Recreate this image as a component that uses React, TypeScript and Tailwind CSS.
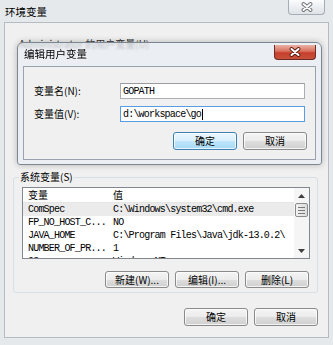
import React from 'react';

const cjk = "font-['Noto_Sans_CJK_SC',sans-serif]";
const mono = "font-['Liberation_Mono','Noto_Sans_CJK_SC',monospace] tracking-[-0.8px] whitespace-pre";

const systemVars: [string, string][] = [
  ['ComSpec', 'C:\\Windows\\system32\\cmd.exe'],
  ['FP_NO_HOST_C...', 'NO'],
  ['JAVA_HOME', 'C:\\Program Files\\Java\\jdk-13.0.2\\'],
  ['NUMBER_OF_PR...', '1'],
  ['OS', 'Windows_NT'],
];

function CloseGlyph({ dark }: { dark: string }) {
  return (
    <svg width="12" height="10" viewBox="0 0 12 10">
      <path d="M2.5 2 L9.5 8 M9.5 2 L2.5 8" stroke={dark} strokeWidth="3.8" strokeLinecap="round" />
      <path d="M2.5 2 L9.5 8 M9.5 2 L2.5 8" stroke="#ffffff" strokeWidth="2" strokeLinecap="round" />
    </svg>
  );
}

function Btn({ children, primary, tall }: { children: React.ReactNode; primary?: boolean; tall?: boolean }) {
  return (
    <div
      className={`${cjk} flex ${tall ? 'h-[18px]' : 'h-[17px]'} w-[64px] items-center justify-center rounded-[3px] border text-[10px] leading-none text-black shadow-[inset_0_0_0_1px_rgba(255,255,255,0.75)] ${
        primary
          ? 'border-[#3c7fb1] bg-[linear-gradient(to_bottom,#eaf6fd_0%,#d9f0fc_50%,#bee6fd_50%,#a7d9f5_100%)]'
          : 'border-[#8a8a8a] bg-[linear-gradient(to_bottom,#f4f4f4_0%,#ececec_50%,#dedede_50%,#d0d0d0_100%)]'
      }`}
    >
      {children}
    </div>
  );
}

function Arrow({ up }: { up?: boolean }) {
  return (
    <svg width="7" height="4" viewBox="0 0 7 4">
      <path d={up ? 'M0 4 L3.5 0 L7 4 Z' : 'M0 0 L3.5 4 L7 0 Z'} fill="#3f3f3f" />
    </svg>
  );
}

function EditDialog() {
  return (
    <div className="absolute left-[17px] top-[42px] flex h-[123px] w-[305px] flex-col rounded-t-[6px] rounded-b-[3px] border border-[#7d8792] bg-[#e9eef3]/75 px-[5px] pb-[4px] shadow-[0_0_6px_rgba(0,0,0,0.25)] backdrop-blur-[1px]">
      <div className="flex h-[23px] items-start justify-between">
        <span className={`${cjk} pl-[1px] pt-[5px] text-[10.5px] leading-[12px] text-black`}>编辑用户变量</span>
        <div className="mt-[2px] flex h-[15px] w-[42px] items-center justify-center rounded-b-[4px] border border-t-0 border-[#6b2a22] bg-[linear-gradient(to_bottom,#eab1a3_0%,#d9705c_45%,#c7402c_55%,#c8503a_100%)]">
          <CloseGlyph dark="#5a1a12" />
        </div>
      </div>
      <div className="flex flex-1 flex-col border border-[#9aa3ad] bg-[#f0f0f0] pl-[10px] pr-[8px] pt-[16px]">
        <div className="flex items-center">
          <span className={`${cjk} w-[86px] text-[10px] leading-none text-black`}>变量名(N):</span>
          <div className={`${mono} flex h-[16px] w-[185px] items-center border border-[#abadb3] border-t-[#999ba0] bg-white pl-[2px] text-[10px] text-black`}>
            GOPATH
          </div>
        </div>
        <div className="mt-[7px] flex items-center">
          <span className={`${cjk} w-[86px] text-[10px] leading-none text-black`}>变量值(V):</span>
          <div className={`${mono} flex h-[16px] w-[185px] items-center border border-[#569de5] bg-white pl-[2px] text-[10px] text-black`}>
            d:\workspace\go
            <span className="ml-[1px] h-[11px] w-[1px] bg-black" />
          </div>
        </div>
        <div className="mt-[10px] flex justify-end gap-[6px]">
          <Btn primary tall>确定</Btn>
          <Btn tall>取消</Btn>
        </div>
      </div>
    </div>
  );
}

function SystemList() {
  return (
    <div className="flex h-[72px] w-[288px] overflow-hidden border border-[#828790] bg-white">
      <div className="flex flex-1 flex-col">
        <div className={`${cjk} flex h-[15px] shrink-0 items-center border-b border-[#e5e5e5] text-[10px] leading-none text-black`}>
          <span className="w-[90px] pl-[5px]">变量</span>
          <span>值</span>
        </div>
        {systemVars.map(([name, value], i) => (
          <div
            key={name}
            className={`${mono} flex h-[13px] shrink-0 items-center text-[10px] leading-none text-black ${i === 0 ? 'bg-[#ebebeb]' : ''}`}
          >
            <span className="w-[90px] pl-[5px]">{name}</span>
            <span>{value}</span>
          </div>
        ))}
      </div>
      <div className="flex w-[15px] flex-col bg-[#f5f5f5]">
        <div className="flex h-[15px] items-center justify-center">
          <Arrow up />
        </div>
        <div className="mx-[1px] flex h-[14px] flex-col items-center justify-center gap-[2px] rounded-[2px] border border-[#8b8b8b] bg-[linear-gradient(to_right,#f2f2f2,#dcdcdc)]">
          <span className="h-[1px] w-[7px] bg-[#7a7a7a]" />
          <span className="h-[1px] w-[7px] bg-[#7a7a7a]" />
          <span className="h-[1px] w-[7px] bg-[#7a7a7a]" />
        </div>
        <div className="flex-1" />
        <div className="flex h-[14px] items-center justify-center">
          <Arrow />
        </div>
      </div>
    </div>
  );
}

export default function App() {
  return (
    <div className="relative h-[345px] w-[333px] overflow-hidden bg-[#e6e9ec]">
      {/* outer window title bar */}
      <div className="flex h-[22px] items-start justify-between pl-[5px] pr-[8px]">
        <span className={`${cjk} pt-[6px] text-[10.5px] leading-[12px] text-black`}>环境变量</span>
        <div className="flex h-[15px] w-[37px] items-center justify-center rounded-b-[4px] border border-t-0 border-[#a4adb6] bg-[linear-gradient(to_bottom,#fafbfc_0%,#eceff2_50%,#dfe3e7_100%)]">
          <CloseGlyph dark="#6b6f74" />
        </div>
      </div>

      {/* outer window client area */}
      <div className="ml-[4px] flex h-[316px] w-[325px] flex-col border border-[#b5bcc4] bg-[#f0f0f0] pb-[8px] pl-[8px] pr-[10px] pt-[16px]">
        <span className={`${cjk} pl-[6px] text-[10px] leading-none text-[#333]`}>Administrator 的用户变量(U)</span>

        <div className="relative mt-[128px] flex w-[305px] flex-col rounded-[3px] border border-[#d5dfe5] pb-[4px] pl-[8px] pr-[8px] pt-[9px]">
          <span className={`${cjk} absolute left-[5px] top-[-7px] bg-[#f0f0f0] px-[1px] text-[10px] leading-[12px] text-black`}>
            系统变量(S)
          </span>
          <SystemList />
          <div className="mt-[12px] flex justify-end gap-[6px]">
            <Btn>新建(W)...</Btn>
            <Btn>编辑(I)...</Btn>
            <Btn>删除(L)</Btn>
          </div>
        </div>

        <div className="mt-[15px] flex justify-end gap-[6px]">
          <Btn tall>确定</Btn>
          <Btn tall>取消</Btn>
        </div>
      </div>

      <EditDialog />
    </div>
  );
}
